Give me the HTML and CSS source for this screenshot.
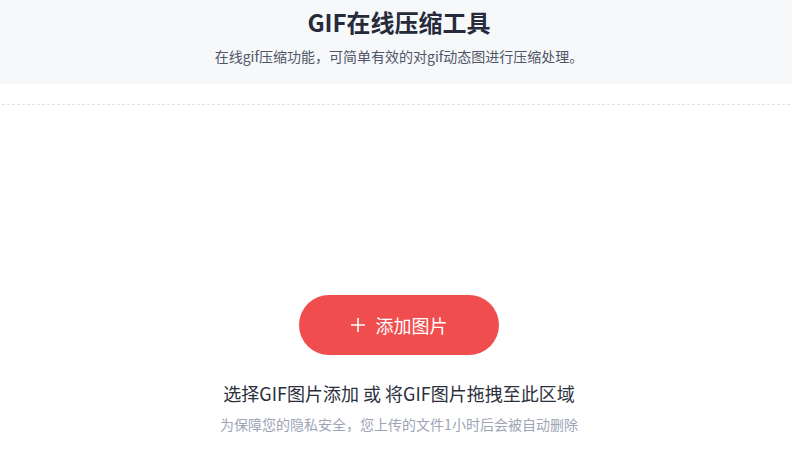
FILE: index.html
```html
<!DOCTYPE html>
<html lang="zh-CN">
<head>
<meta charset="utf-8">
<title>GIF在线压缩工具</title>
<link rel="stylesheet" href="styles.css">
</head>
<body>
<header class="hero">
  <h1 class="hero-title">GIF在线压缩工具</h1>
  <p class="hero-desc">在线gif压缩功能，可简单有效的对gif动态图进行压缩处理。</p>
</header>
<main class="drop-zone">
  <button class="add-btn" type="button">
    <svg class="plus" viewBox="0 0 14 14" width="14" height="14" aria-hidden="true"><path d="M7 0v14M0 7h14" stroke="#fff" stroke-width="1.6" fill="none"/></svg>
    <span>添加图片</span>
  </button>
  <p class="drop-hint">选择GIF图片添加 或 将GIF图片拖拽至此区域</p>
  <p class="drop-note">为保障您的隐私安全，您上传的文件1小时后会被自动删除</p>
</main>
</body>
</html>
```

FILE: styles.css
```css
html, body {
  margin: 0;
  padding: 0;
  background: #fff;
  font-family: "Noto Sans CJK SC", "Noto Sans", sans-serif;
}
.hero {
  background: #f7f8fa;
  height: 84px;
  box-sizing: border-box;
  padding: 6px 0 0 6px;
  text-align: center;
}
.hero-title {
  margin: 0;
  font-size: 24px;
  line-height: 32px;
  font-weight: 700;
  color: #252b3a;
}
.hero-desc {
  margin: 8px 0 0;
  font-size: 14px;
  line-height: 20px;
  color: #4f5668;
}
.drop-zone {
  margin-top: 20px;
  height: 600px;
  box-sizing: border-box;
  padding: 191px 0 0 6px;
  background: repeating-linear-gradient(90deg, transparent 0 2px, #e2e2e8 2px 5px) top left / 100% 1px no-repeat;
  display: flex;
  flex-direction: column;
  align-items: center;
}
.add-btn {
  width: 200px;
  height: 60px;
  border: none;
  border-radius: 30px;
  background: #f04d4f;
  color: #fff;
  font-family: inherit;
  font-size: 18px;
  display: flex;
  align-items: center;
  justify-content: center;
  gap: 11px;
  padding: 0;
  cursor: pointer;
}
.add-btn span { line-height: 24px; }
.drop-hint {
  margin: 25px 0 0;
  font-size: 18px;
  line-height: 26px;
  color: #2b303b;
}
.drop-note {
  margin: 8px 0 0;
  font-size: 14px;
  line-height: 20px;
  color: #9ea4b5;
}
```
